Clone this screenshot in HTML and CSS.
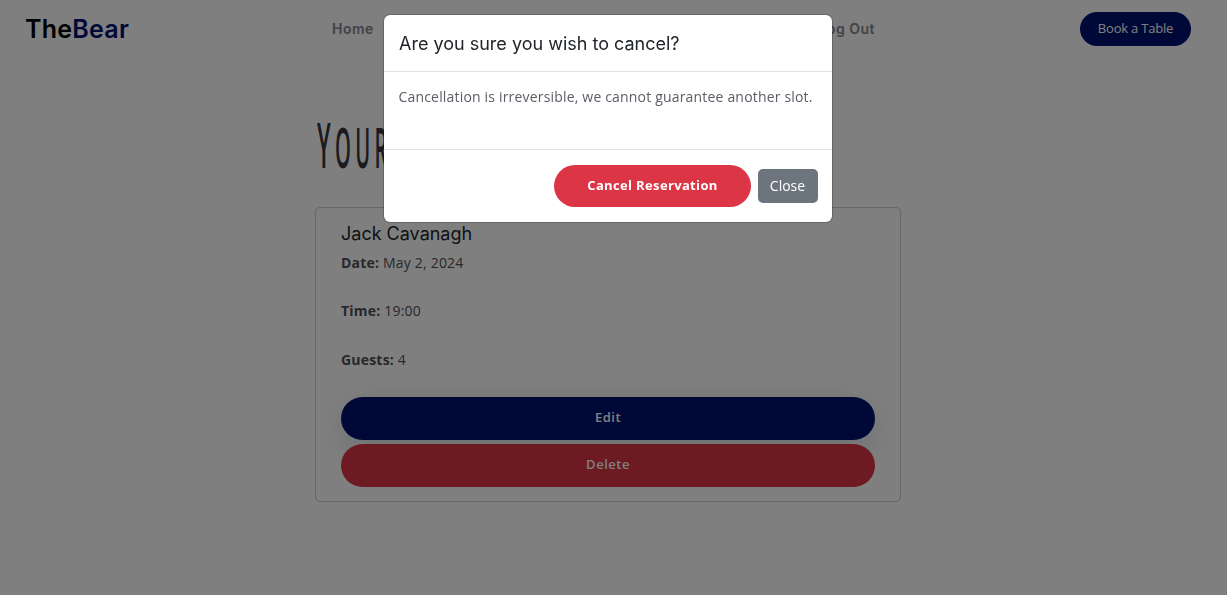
FILE: index.html
```html
<!DOCTYPE html>
<html lang="en">
<head>
<meta charset="utf-8">
<title>TheBear</title>
<link rel="stylesheet" href="styles.css">
</head>
<body>
<header class="header">
  <a class="logo">The<span class="logo-accent">Bear</span></a>
  <nav class="nav"><a>Home</a><a>Log Out</a></nav>
  <a class="book">Book a Table</a>
</header>
<main class="main">
  <h1 class="title"><span class="title-text">Your</span></h1>
  <section class="card">
    <h2 class="name">Jack Cavanagh</h2>
    <p class="detail"><b>Date:</b> May 2, 2024</p>
    <p class="detail time"><b>Time:</b> 19:00</p>
    <p class="detail"><b>Guests:</b> 4</p>
    <button class="pill edit">Edit</button>
    <button class="pill delete">Delete</button>
  </section>
</main>
<div class="backdrop"></div>
<div class="modal" role="dialog">
  <div class="modal-head"><h3 class="modal-title">Are you sure you wish to cancel?</h3></div>
  <div class="modal-body"><p class="modal-text">Cancellation is irreversible, we cannot guarantee another slot.</p></div>
  <div class="modal-foot">
    <button class="confirm">Cancel Reservation</button>
    <button class="close">Close</button>
  </div>
</div>
</body>
</html>
```
FILE: styles.css
```css
* { box-sizing: border-box; }
body { margin: 0; height: 595px; overflow: hidden; background: #fff; color: #4f4f59; font-family: "Open Sans", sans-serif; }
h1, h2, h3, p { margin: 0; }
button { border: 0; font-family: inherit; color: #fff; }
.header { display: flex; justify-content: space-between; align-items: center; height: 58px; padding: 0 36px 0 25px; }
.logo { width: 307px; font: 600 25px/30px Inter, sans-serif; letter-spacing: .25px; color: #000; }
.logo-accent { color: #00106e; }
.nav { display: flex; flex: none; justify-content: space-between; width: 543px; margin-right: auto; font: 600 14px/20px Inter, sans-serif; letter-spacing: .48px; color: #85858f; }
.book { display: block; width: 111px; height: 34px; border-radius: 17px; background: #00106e; color: #fff; font-size: 13px; line-height: 33px; letter-spacing: -.2px; text-align: center; }
.main { width: 586px; margin-left: 315px; padding-top: 54px; }
.title { height: 95px; padding-left: 2px; font: 600 56px/64px "Open Sans", sans-serif; color: #37373f; white-space: nowrap; }
.title-text { display: inline-block; text-transform: uppercase; letter-spacing: 12px; transform: scaleX(.36); transform-origin: left; }
.title-text::first-letter { font-size: 64px; line-height: 64px; }
.card { display: flex; flex-direction: column; height: 295px; padding: 14px 25px 0; border: 1px solid #cfcfcf; border-radius: 5px; }
.name { font: 400 18px/24px Inter, sans-serif; color: #212529; }
.detail { flex: none; height: 48.5px; padding-top: 6px; font-size: 14px; line-height: 21px; letter-spacing: .2px; }
.time { padding-top: 5px; }
.pill { flex: none; height: 43px; padding-bottom: 3px; border-radius: 22px; font-size: 13px; font-weight: 600; letter-spacing: .5px; }
.edit { margin-top: 5px; background: #00106e; box-shadow: 0 8px 28px rgba(0, 40, 80, .15); }
.delete { position: relative; margin-top: 4px; background: #dc3545; }
.backdrop { position: fixed; inset: 0; background: rgba(0, 0, 0, .5); }
.modal { position: fixed; left: 383px; top: 14px; width: 450px; height: 209px; border: 1px solid rgba(0, 0, 0, .2); border-radius: 7px; background: #fff; background-clip: padding-box; }
.modal-head { height: 57px; padding: 16px 15px; border-bottom: 1px solid #dee2e6; }
.modal-title { font: 400 18px/26px Inter, sans-serif; color: #212529; }
.modal-body { height: 77px; padding: 14px 15px 0 14.5px; }
.modal-text { color: #5c5c66; font-size: 14px; line-height: 21px; letter-spacing: .18px; white-space: nowrap; }
.modal-foot { display: flex; justify-content: flex-end; align-items: center; gap: 7px; height: 73px; padding: 0 14px; border-top: 1px solid #dee2e6; }
.confirm { width: 197px; height: 42px; padding-bottom: 3px; border-radius: 21px; background: #dc3545; font-size: 13px; font-weight: 700; letter-spacing: .35px; }
.close { width: 60px; height: 34px; border-radius: 5px; background: #6c757d; font-size: 14px; font-weight: 500; padding: 0 1px 2px 0; }
```
